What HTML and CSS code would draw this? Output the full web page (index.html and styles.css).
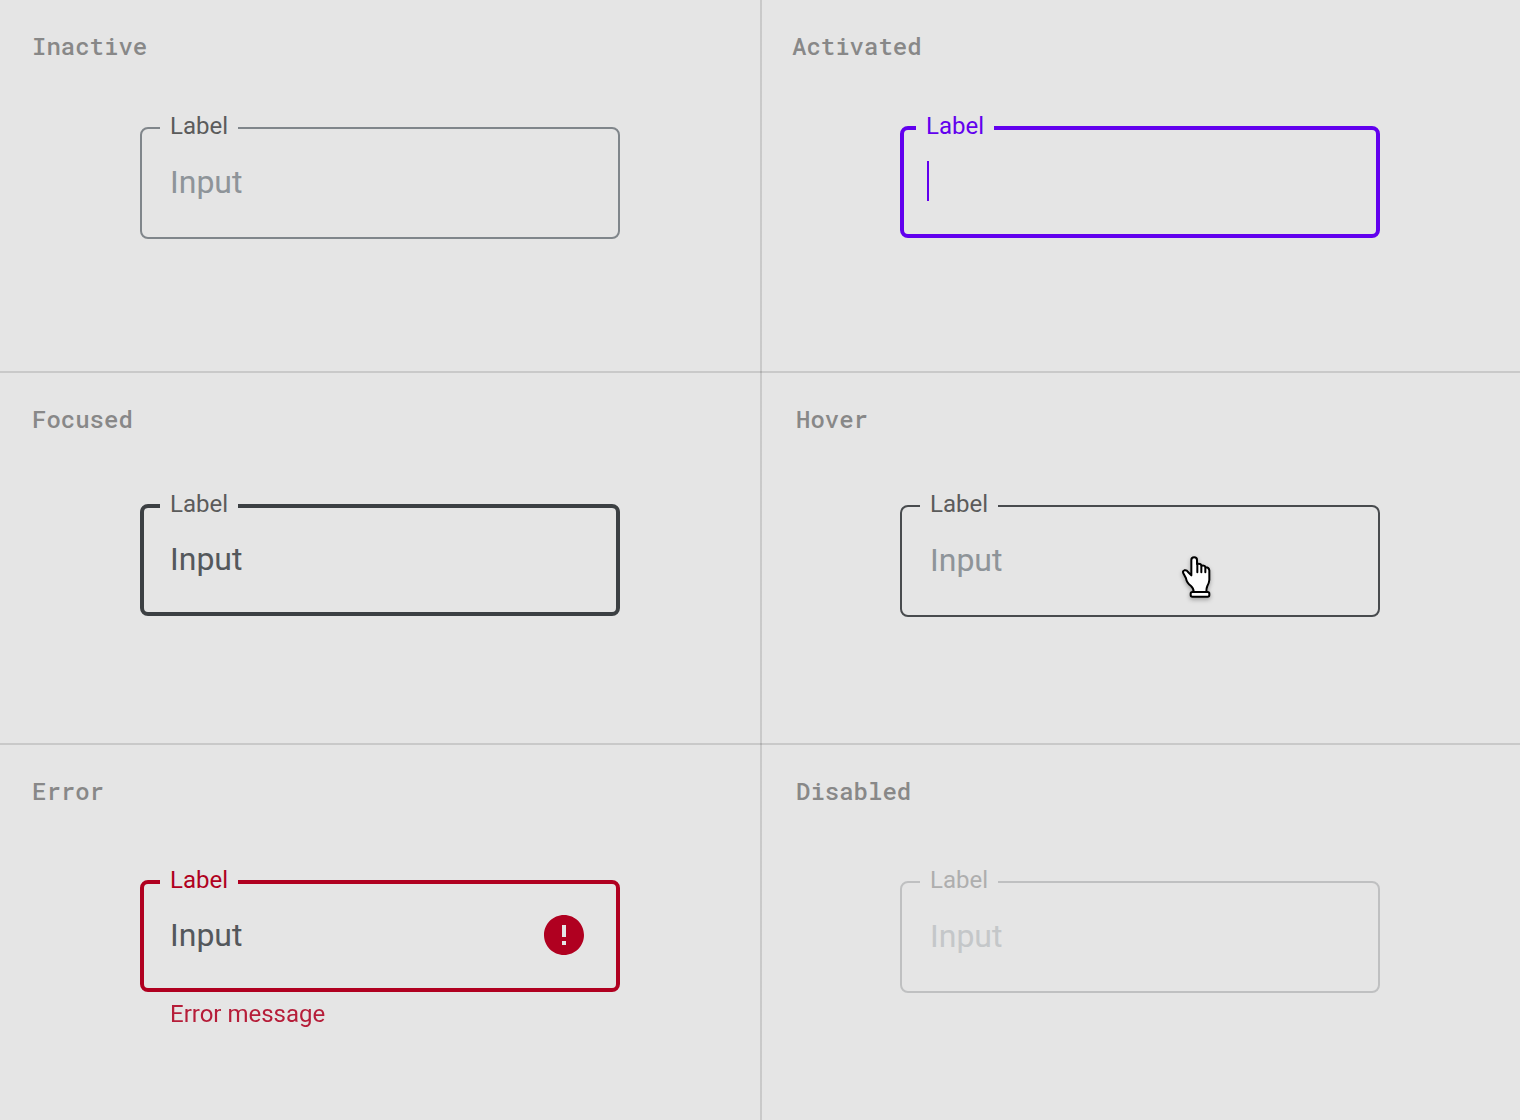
FILE: index.html
```
<!DOCTYPE html>
<html lang="en">
<head>
  <meta charset="UTF-8">
  <meta name="viewport" content="width=device-width, initial-scale=1.0">
  <title>Text field states</title>
  <link rel="stylesheet" href="styles.css">
</head>
<body>
  <main class="states">
    <section class="state">
      <h2 class="state__title">Inactive</h2>
      <fieldset class="field">
        <legend class="field__legend"><label for="inactive">Label</label></legend>
        <div class="field__row">
          <input class="field__input" id="inactive" type="text" placeholder="Input">
        </div>
      </fieldset>
    </section>

    <section class="state">
      <h2 class="state__title">Activated</h2>
      <fieldset class="field field--thick field--activated">
        <legend class="field__legend"><label for="activated">Label</label></legend>
        <div class="field__row">
          <span class="field__caret"></span>
          <input class="field__input" id="activated" type="text">
        </div>
      </fieldset>
    </section>

    <section class="state state--middle">
      <h2 class="state__title">Focused</h2>
      <fieldset class="field field--thick field--focused">
        <legend class="field__legend"><label for="focused">Label</label></legend>
        <div class="field__row">
          <input class="field__input" id="focused" type="text" value="Input">
        </div>
      </fieldset>
    </section>

    <section class="state state--middle">
      <h2 class="state__title state__title--indented">Hover</h2>
      <fieldset class="field field--hover">
        <legend class="field__legend"><label for="hover">Label</label></legend>
        <div class="field__row">
          <input class="field__input" id="hover" type="text" placeholder="Input">
          <svg class="pointer" viewBox="60 40 96 138" aria-hidden="true">
            <path d="M94 104V58Q94 50 102.500 50Q111 50 111 58V70Q122 68 125 75Q135 73 137 80Q147 80 148 89V118Q147 128 142 136Q139 142 139 154H101Q101 143 93 136Q80 126 78 113L70 98Q67 91 73 89Q80 87 84 94Z"/>
            <path d="M112 70V95M124 75V95M136 80V95"/>
            <rect x="92" y="154" width="56" height="14" rx="5"/>
          </svg>
        </div>
      </fieldset>
    </section>

    <section class="state state--last">
      <h2 class="state__title">Error</h2>
      <fieldset class="field field--thick field--error">
        <legend class="field__legend"><label for="error">Label</label></legend>
        <div class="field__row">
          <input class="field__input" id="error" type="text" value="Input" aria-invalid="true" aria-describedby="error-message">
          <svg class="field__icon" viewBox="0 0 24 24" aria-hidden="true">
            <path d="M12 2C6.480 2 2 6.480 2 12s4.480 10 10 10 10-4.480 10-10S17.520 2 12 2zm1 15h-2v-2h2v2zm0-4h-2V7h2v6z"/>
          </svg>
        </div>
      </fieldset>
      <p class="state__message" id="error-message">Error message</p>
    </section>

    <section class="state state--last">
      <h2 class="state__title state__title--indented">Disabled</h2>
      <fieldset class="field field--disabled" disabled>
        <legend class="field__legend"><label for="disabled">Label</label></legend>
        <div class="field__row">
          <input class="field__input" id="disabled" type="text" placeholder="Input" disabled>
        </div>
      </fieldset>
    </section>
  </main>
</body>
</html>
```
FILE: styles.css
```
*,
*::after,
*::before {
  padding: 0;
  margin: 0;
  box-sizing: border-box;
}

:root {
  --surface: #e5e5e5;
  --divider: rgba(0, 0, 0, 0.12);
  --title: #888;
  --primary: #6200ee;
  --error: #b00020;
}

body {
  background-color: var(--surface);
  font-family: Roboto, "Liberation Sans", sans-serif;
}

.states {
  display: grid;
  grid-template-columns: 1fr 1fr;
  grid-template-rows: minmax(371px, auto) minmax(372px, auto) 1fr;
  min-height: 100vh;
}

.state {
  --title-gap: 52px;
  padding: 32px;
}

.state--middle {
  --title-gap: 57px;
  border-top: 2px solid var(--divider);
}

.state--last {
  --title-gap: 61px;
  border-top: 2px solid var(--divider);
}

/* vertical divider, drawn without taking any width */
.state:nth-child(even) {
  background-image: linear-gradient(var(--divider), var(--divider));
  background-size: 2px 100%;
  background-repeat: no-repeat;
  background-origin: border-box;
}

.state__title {
  margin-bottom: var(--title-gap);
  color: var(--title);
  font: 500 24px/28px "Roboto Mono", "DejaVu Sans Mono", monospace;
}

.state__title--indented {
  padding-left: 4px;
}

.state__message {
  width: 100%;
  max-width: 480px;
  margin: 8px auto 0;
  padding-left: 30px;
  color: var(--error);
  font-size: 24px;
  line-height: 28px;
  opacity: 0.87;
}

.field {
  --outline: #80868b;
  --label: #5b5b5b;
  --text: #8e9499;
  --line: 2px;
  --inset: 28px;
  width: 100%;
  min-width: 0;
  max-width: 480px;
  margin: 0 auto;
  padding-bottom: 17px;
  border: var(--line) solid var(--outline);
  border-radius: 8px;
}

.field__legend {
  margin-left: calc(var(--inset) - 10px);
  padding: 0 10px 4px;
  color: var(--label);
  font-size: 24px;
  line-height: 28px;
}

.field__row {
  position: relative;
  display: flex;
  align-items: center;
  height: 76px;
  padding: 0 28px 0 var(--inset);
}

.field__input {
  flex: 1;
  min-width: 0;
  height: 40px;
  border: 0;
  outline: 0;
  background: transparent;
  color: var(--text);
  font: 400 32px/40px Roboto, "Liberation Sans", sans-serif;
}

.field__input::placeholder {
  color: var(--text);
  opacity: 1;
}

.field__caret {
  width: 2px;
  height: 40px;
  margin-left: 1px;
  background-color: var(--primary);
}

.field__icon {
  flex: none;
  width: 48px;
  height: 48px;
  fill: var(--error);
}

.field--thick {
  --line: 4px;
  --inset: 26px;
  padding-bottom: 16px;
}

.field--thick .field__row {
  height: 74px;
}

.field--activated {
  --outline: var(--primary);
  --label: var(--primary);
  --inset: 22px;
}

.field--focused {
  --outline: #3c4043;
  --text: #54585c;
}

.field--hover {
  --outline: #484b4e;
}

.field--error {
  --outline: var(--error);
  --label: var(--error);
  --text: #54585c;
}

.field--disabled {
  --outline: #bfc0c1;
  --label: #aeaeae;
  --text: #c4c7c9;
}

.pointer {
  position: absolute;
  top: 32px;
  right: 166px;
  width: 32px;
  height: 46px;
  overflow: visible;
  fill: #fff;
  stroke: #000;
  stroke-width: 6;
  stroke-linecap: round;
  stroke-linejoin: round;
  filter: drop-shadow(0 2px 2px rgba(0, 0, 0, 0.3));
}
```
